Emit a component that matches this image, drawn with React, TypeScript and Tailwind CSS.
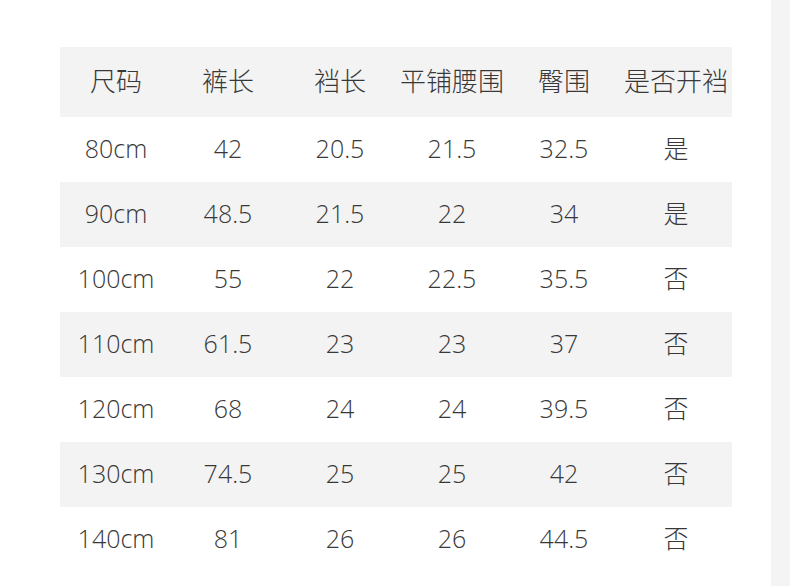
const headers = ["尺码", "裤长", "裆长", "平铺腰围", "臀围", "是否开裆"];

const rows = [
  ["80cm", "42", "20.5", "21.5", "32.5", "是"],
  ["90cm", "48.5", "21.5", "22", "34", "是"],
  ["100cm", "55", "22", "22.5", "35.5", "否"],
  ["110cm", "61.5", "23", "23", "37", "否"],
  ["120cm", "68", "24", "24", "39.5", "否"],
  ["130cm", "74.5", "25", "25", "42", "否"],
  ["140cm", "81", "26", "26", "44.5", "否"],
];

const App = () => {
  return (
    <div
      className="flex h-[586px] w-[790px] bg-white text-[#383838]"
      style={{ fontFamily: '"Open Sans", "Noto Sans CJK SC", sans-serif' }}
    >
      <div className="flex-1 pl-[60px] pt-[47px]">
        <div className="w-[672px]">
          {/* header */}
          <div className="grid h-[70px] grid-cols-6 items-center bg-[#f3f3f3] pb-[3px]">
            {headers.map((h) => (
              <div key={h} className="text-center text-[26px] leading-none font-light">
                {h}
              </div>
            ))}
          </div>

          {rows.map((row, i) => (
            <div
              key={row[0]}
              className={`grid h-[65px] grid-cols-6 items-center pb-[2px] ${i % 2 === 1 ? "bg-[#f3f3f3]" : "bg-white"}`}
            >
              {row.map((cell, j) => (
                <div key={j} className="text-center text-[25px] leading-none font-light">
                  {cell}
                </div>
              ))}
            </div>
          ))}
        </div>
      </div>

      {/* right edge strip */}
      <div className="h-full w-[19px] bg-[#f4f4f4]" />
    </div>
  );
};

export default App;
